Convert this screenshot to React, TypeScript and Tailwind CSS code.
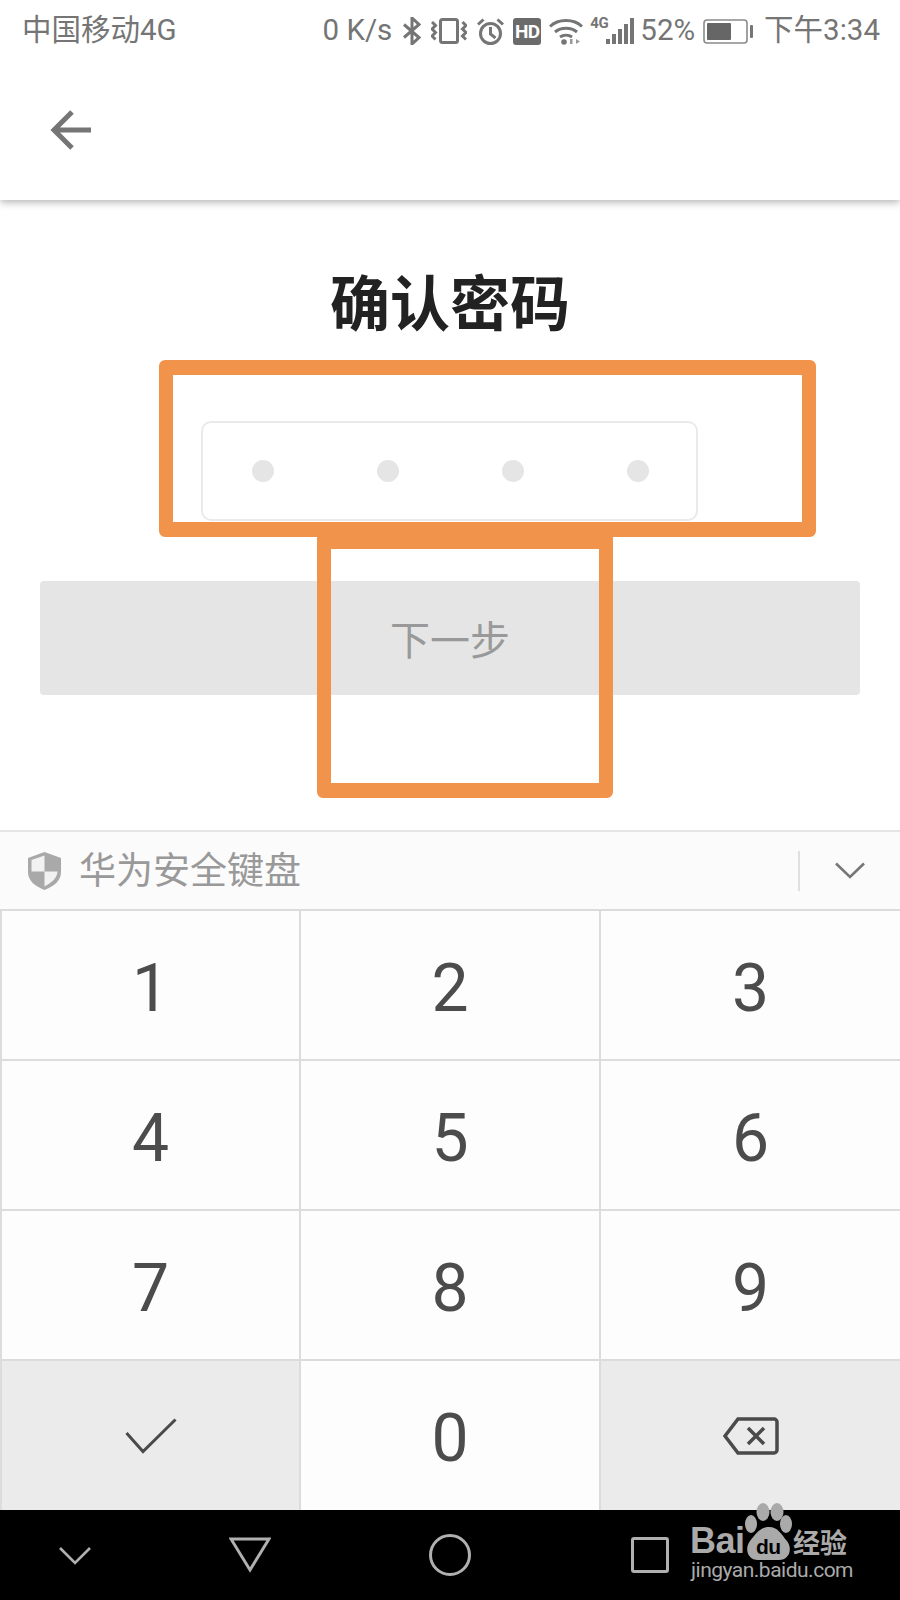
const sans = "font-['Roboto','Noto_Sans_CJK_SC',sans-serif]";

const keys = ["1", "2", "3", "4", "5", "6", "7", "8", "9"];

function StatusIcons() {
  return (
    <div className="flex items-center">
      <span className="text-[29.5px] leading-none">0 K/s</span>
      <svg width="18" height="28" viewBox="0 0 18 28" fill="none" stroke="#757575" strokeWidth="3" className="ml-[11px]">
        <path d="M1 7.500 16 20.500 9 27V1l7 6.500L1 20.500" />
      </svg>
      <svg width="36" height="26" viewBox="0 0 36 26" fill="none" stroke="#757575" strokeWidth="3" className="ml-[10px]">
        <rect x="9.500" y="1.500" width="17" height="23" rx="2" />
        <path d="M1 4 4.500 7.500 1 11l3.500 3.500L1 18l3.500 3.500M31.500 4 35 7.500 31.500 11l3.500 3.500-3.500 3.500 3.500 3.500" />
      </svg>
      <svg width="27" height="27" viewBox="0 0 27 27" fill="none" stroke="#757575" strokeWidth="3" className="ml-[10px]">
        <circle cx="13.500" cy="15.500" r="10" />
        <path d="M13.500 9v7l5 4M1 6.500 6.500 1.500M26 6.500 20.500 1.500" />
      </svg>
      <div className="ml-[9px] w-[28px] h-[27px] rounded-[3px] bg-[#6b6b6b] flex items-center justify-center text-white text-[19px] font-bold leading-none tracking-[-0.5px]">HD</div>
      <svg width="34" height="27" viewBox="0 0 34 27" fill="none" className="ml-[8px]">
        <path d="M1 8.500C9 .5 25 .5 33 8.500M6 14c6-5 16-5 22 0M11 19c3.500-2.500 8.500-2.500 12 0" stroke="#757575" strokeWidth="3" />
        <circle cx="15" cy="24" r="2.800" fill="#757575" />
        <path d="M21 21h2.500v5H21zM27 21l4 2.500-4 2.500z" fill="#9a9a9a" />
      </svg>
      <div className="ml-[6px] w-[46px] h-[28px] relative">
        <span className="absolute left-[1px] top-[-1px] text-[15px] leading-none font-bold tracking-[-0.5px]">4G</span>
        <svg width="46" height="28" viewBox="0 0 46 28" fill="#757575">
          <rect x="17" y="22" width="4" height="5" />
          <rect x="23" y="17" width="4" height="10" />
          <rect x="29" y="12" width="4" height="15" />
          <rect x="35" y="7" width="4" height="20" />
          <rect x="41" y="1" width="4" height="26" />
        </svg>
      </div>
      <span className="ml-[5px] text-[29.5px] leading-none">52%</span>
      <svg width="50" height="25" viewBox="0 0 50 25" className="ml-[8px]">
        <rect x="1" y="1" width="43" height="23" rx="3" fill="none" stroke="#8a8a8a" strokeWidth="1.600" />
        <rect x="4" y="4" width="24" height="17" rx="1" fill="#666666" />
        <rect x="47" y="6" width="3" height="13" rx="1" fill="#757575" />
      </svg>
      <span className="ml-[11px] text-[29.5px] leading-none">下午3:34</span>
    </div>
  );
}

function Key({ label, muted, children }: { label?: string; muted?: boolean; children?: React.ReactNode }) {
  return (
    <div
      className={`flex items-center justify-center border-l-2 border-t-2 border-[#dcdcdc] text-[66px] leading-none text-[#4c4c4c] ${muted ? "bg-[#ebebeb]" : "bg-[#fdfdfd]"}`}
    >
      {label && <span className="pt-[7px]">{label}</span>}
      {children}
    </div>
  );
}

function Watermark() {
  return (
    <div className="absolute left-[690px] top-[1503px] w-[165px] h-[80px] text-[#aaaaaa]">
      <span className="absolute left-[0px] top-[20px] text-[36px] leading-[36px] font-bold font-['Liberation_Sans',sans-serif] tracking-[-0.5px]">Bai</span>
      <svg width="48" height="58" viewBox="0 0 48 58" className="absolute left-[55px] top-0" fill="#aaaaaa">
        <ellipse cx="18" cy="9" rx="6.500" ry="9" />
        <ellipse cx="32" cy="9" rx="6.500" ry="9" />
        <ellipse cx="6" cy="21" rx="6" ry="9" />
        <ellipse cx="41" cy="21" rx="6" ry="9" />
        <path d="M24 24c9 0 12 7 18 14 6 8 2 19-8 19H13C3 57-1 46 5 38c6-7 10-14 19-14Z" />
      </svg>
      <span className="absolute left-[66px] top-[32px] text-[21px] leading-[24px] font-bold text-black font-['Liberation_Sans',sans-serif] tracking-[-0.5px]">du</span>
      <span className="absolute left-[103px] top-[25px] text-[27px] leading-[27px] font-bold font-['Noto_Sans_CJK_SC',sans-serif]">经验</span>
      <span className="absolute left-[1px] top-[55px] text-[21px] leading-[25px] font-['Roboto',sans-serif] whitespace-nowrap tracking-[-0.5px]">jingyan.baidu.com</span>
    </div>
  );
}

export default function App() {
  return (
    <div className={`relative w-[900px] h-[1600px] overflow-hidden bg-white flex flex-col ${sans}`}>
      <header className="h-[200px] shrink-0 bg-white shadow-[0_2px_8px_rgba(0,0,0,0.32)] relative z-10 text-[#757575]">
        <div className="h-[62px] pl-[22px] pr-[20px] flex items-center justify-between">
          <span className="text-[29.5px] leading-none">中国移动4G</span>
          <StatusIcons />
        </div>
        <div className="pl-[50px] pt-[48px]">
          <svg width="41" height="40" viewBox="0 0 41 40" fill="none" stroke="#757575" strokeWidth="5">
            <path d="M22 2 4 20l18 18M4 20h37" />
          </svg>
        </div>
      </header>

      <main className="flex-1 flex flex-col items-center">
        <h1 className="mt-[59px] text-[60px] leading-[82px] font-bold text-[#222222] font-['Noto_Sans_CJK_SC',sans-serif]">确认密码</h1>
        <div className="mt-[80px] w-[497px] h-[100px] ml-[-2px] rounded-[10px] border-2 border-[#eaeaea] flex items-center pl-[49px] gap-[103px]">
          <span className="w-[22px] h-[22px] rounded-full bg-[#e5e5e5]" />
          <span className="w-[22px] h-[22px] rounded-full bg-[#e5e5e5]" />
          <span className="w-[22px] h-[22px] rounded-full bg-[#e5e5e5]" />
          <span className="w-[22px] h-[22px] rounded-full bg-[#e5e5e5]" />
        </div>
        <button className="mt-[60px] w-[820px] h-[114px] rounded-[4px] bg-[#e5e5e5] text-[40px] text-[#999999] font-['Noto_Sans_CJK_SC',sans-serif]">下一步</button>
      </main>

      <section className="shrink-0 bg-[#fbfbfb]">
        <div className="h-[79px] border-t-2 border-[#e5e5e5] flex items-center pl-[28px] text-[#999999]">
          <svg width="33" height="38" viewBox="0 0 33 38">
            <path d="M16.500 0 33 6v14c0 9-7 14-16.500 18C7 34 0 29 0 20V6Z" fill="#a9a9a9" />
            <path d="M16.500 3.500v16h-13V8ZM16.500 19.500h13c-.5 7-6 11-13 15Z" fill="#f2f2f2" />
          </svg>
          <span className="ml-[18px] mb-[4px] text-[37px] leading-none font-['Noto_Sans_CJK_SC',sans-serif]">华为安全键盘</span>
          <div className="ml-auto w-[2px] h-[40px] bg-[#e0e0e0]" />
          <svg width="30" height="17" viewBox="0 0 30 17" fill="none" stroke="#777777" strokeWidth="2.600" className="ml-[35px] mr-[35px]">
            <path d="M1 1.500 15 15 29 1.500" />
          </svg>
        </div>
        <div className="grid grid-cols-[299px_300px_301px] grid-rows-[150px_150px_150px_151px] font-['Roboto',sans-serif]">
          {keys.map((k) => (
            <Key key={k} label={k} />
          ))}
          <Key muted>
            <svg width="52" height="36" viewBox="0 0 52 36" fill="none" stroke="#4a4a4a" strokeWidth="3">
              <path d="M1.500 15 18 33.500 50.500 1.500" />
            </svg>
          </Key>
          <Key label="0" />
          <Key muted>
            <svg width="56" height="38" viewBox="0 0 56 38" fill="none" stroke="#4a4a4a" strokeWidth="3.500">
              <path d="M15 2h36a3 3 0 0 1 3 3v28a3 3 0 0 1-3 3H15L2 19ZM25 11l16 16M41 11 25 27" />
            </svg>
          </Key>
        </div>
      </section>

      <nav className="shrink-0 h-[90px] bg-black flex items-center relative">
        <svg width="32" height="18" viewBox="0 0 32 18" fill="none" stroke="#b0b0b0" strokeWidth="2.600" className="ml-[59px] mt-[2px]">
          <path d="M1 1 16 16 31 1" />
        </svg>
        <svg width="42" height="36" viewBox="0 0 42 36" fill="none" stroke="#b0b0b0" strokeWidth="3" className="ml-[138px]">
          <path d="M2 2h38L21 33Z" />
        </svg>
        <div className="ml-[158px] w-[42px] h-[42px] rounded-full border-[3px] border-[#b0b0b0]" />
        <div className="ml-[160px] w-[38px] h-[36px] rounded-[3px] border-[3px] border-[#b0b0b0]" />
      </nav>

      {/* annotation boxes drawn over the screenshot */}
      <div className="absolute left-[159px] top-[360px] w-[657px] h-[177px] rounded-[6px] border-x-[14px] border-y-[15px] border-[#f2934b] z-20" />
      <div className="absolute left-[317px] top-[532px] w-[296px] h-[266px] rounded-[6px] border-x-[14px] border-t-[17px] border-b-[15px] border-[#f2934b] z-20" />
      <Watermark />
    </div>
  );
}
